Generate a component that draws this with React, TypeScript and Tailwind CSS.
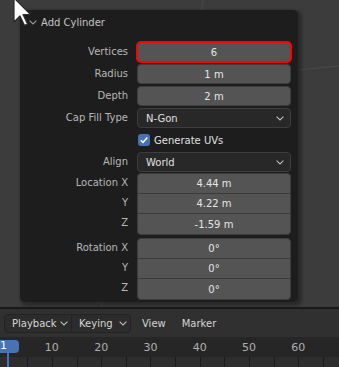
import React from 'react';

// Blender "Adjust Last Operation" panel over the 3D viewport, with the timeline header below

const FRAME_X = (f: number) => 7.5 + (f - 1) * 4.93;

const Chevron: React.FC<{ className?: string }> = ({ className = '' }) => (
  <svg width="8" height="5" viewBox="0 0 8 5" className={className}>
    <path d="M0.6 0.6 L4 4 L7.4 0.6" fill="none" stroke="currentColor" strokeWidth="1.1" />
  </svg>
);

const Label: React.FC<{ text: string }> = ({ text }) => (
  <div className="w-[108px] h-[20px] leading-[20px] text-right text-[10px] text-[#b8b8b8]">{text}</div>
);

const NumberField: React.FC<{ value: string; active?: boolean }> = ({ value, active }) => (
  <div
    className={`h-[20px] rounded-[4px] bg-[#545454] flex items-center justify-center text-[10px] text-[#e6e6e6] border ${
      active ? 'border-[#ff0000] ring-1 ring-[#ff0000]' : 'border-[#3d3d3d]'
    }`}
  >
    {value}
  </div>
);

const SelectField: React.FC<{ value: string }> = ({ value }) => (
  <div className="h-[20px] rounded-[4px] bg-[#282828] border border-[#3d3d3d] flex items-center pl-[8px] pr-[6px] text-[10px] text-[#e0e0e0]">
    <span>{value}</span>
    <Chevron className="ml-auto text-[#bdbdbd]" />
  </div>
);

const Row: React.FC<{ label: string; children: React.ReactNode }> = ({ label, children }) => (
  <div className="flex items-center">
    <Label text={label} />
    <div className="ml-[9px] w-[154px]">{children}</div>
  </div>
);

const VectorGroup: React.FC<{ labels: string[]; values: string[] }> = ({ labels, values }) => (
  <div className="flex">
    <div className="flex flex-col">
      {labels.map((l) => (
        <Label key={l} text={l} />
      ))}
    </div>
    <div className="ml-[9px] w-[154px] rounded-[4px] overflow-hidden bg-[#545454] border border-[#3d3d3d] divide-y divide-[#3a3a3a]">
      {values.map((v, i) => (
        <div key={i} className="h-[20px] flex items-center justify-center text-[10px] text-[#e6e6e6]">
          {v}
        </div>
      ))}
    </div>
  </div>
);

const Cursor = () => (
  <svg width="40" height="34" viewBox="0 0 40 34" className="absolute left-0 top-0 z-20">
    <polygon
      points="14,-2 14,22 20,16 24.5,25.5 27.5,24 23,14.5 30.5,14.5"
      fill="#ffffff"
      stroke="#2a2a2a"
      strokeWidth="1.2"
      strokeLinejoin="round"
    />
  </svg>
);

export default function App() {
  const ticks = [];
  for (let f = 5; f <= 70; f += 5) ticks.push(f);

  return (
    <div className="w-[339px] h-[367px] overflow-hidden flex flex-col bg-[#3c3c3c] font-['DejaVu_Sans',sans-serif] select-none">
      {/* 3D viewport */}
      <div className="relative h-[307px] pl-[20px] pt-[10px]">
        <svg width="339" height="307" className="absolute left-0 top-0">
          <line x1="203" y1="0" x2="199" y2="30" stroke="#4a4a4a" strokeWidth="1" />
          <line x1="298" y1="70" x2="339" y2="66" stroke="#4a4a4a" strokeWidth="1" />
          <line x1="103" y1="303" x2="101" y2="307" stroke="#4a4a4a" strokeWidth="1" />
        </svg>
        <Cursor />

        <div className="relative w-[278px] h-[292px] rounded-[5px] bg-[#1d1d1d] shadow-[2px_2px_3px_2px_rgba(0,0,0,0.3)]">
          <div className="h-[24px] flex items-center pl-[9px] text-[10px] text-[#c4c4c4]">
            <Chevron className="text-[#9a9a9a]" />
            <span className="ml-[4px]">Add Cylinder</span>
          </div>

          <div className="mt-[8px] flex flex-col gap-[2px]">
            <Row label="Vertices">
              <NumberField value="6" active />
            </Row>
            <Row label="Radius">
              <NumberField value="1 m" />
            </Row>
            <Row label="Depth">
              <NumberField value="2 m" />
            </Row>
            <Row label="Cap Fill Type">
              <SelectField value="N-Gon" />
            </Row>
            <Row label="">
              <div className="flex items-center h-[20px] pl-[1px]">
                <div className="w-[12px] h-[12px] rounded-[3px] bg-[#4772b3] flex items-center justify-center">
                  <svg width="10" height="10" viewBox="0 0 10 10">
                    <path d="M1.8 5.2 L4 7.4 L8.3 2.4" fill="none" stroke="#ffffff" strokeWidth="1.5" />
                  </svg>
                </div>
                <span className="ml-[4px] text-[10px] text-[#e0e0e0]">Generate UVs</span>
              </div>
            </Row>
            <Row label="Align">
              <SelectField value="World" />
            </Row>
          </div>

          <div className="mt-[1px]">
            <VectorGroup labels={['Location X', 'Y', 'Z']} values={['4.44 m', '4.22 m', '-1.59 m']} />
          </div>
          <div className="mt-[3px]">
            <VectorGroup labels={['Rotation X', 'Y', 'Z']} values={['0°', '0°', '0°']} />
          </div>
        </div>
      </div>

      <div className="h-[2px] bg-[#191919]" />

      {/* Timeline header */}
      <div className="h-[28px] bg-[#303030] flex items-center pl-[4px] text-[10px] text-[#d6d6d6]">
        <div className="flex h-[19px] rounded-[4px] border border-[#242424] bg-[#2c2c2c]">
          <div className="w-[67px] flex items-center pl-[7px] pr-[3px] border-r border-[#242424]">
            <span>Playback</span>
            <Chevron className="ml-auto text-[#bdbdbd]" />
          </div>
          <div className="w-[58px] flex items-center pl-[7px] pr-[3px]">
            <span>Keying</span>
            <Chevron className="ml-auto text-[#bdbdbd]" />
          </div>
        </div>
        <span className="ml-[11px]">View</span>
        <span className="ml-[16px]">Marker</span>
      </div>

      {/* Timeline */}
      <div className="relative flex-1 flex flex-col bg-[#262626]">
        <div className="relative h-[20px]">
          {[10, 20, 30, 40, 50, 60].map((f) => (
            <span
              key={f}
              className="absolute top-[3px] -translate-x-1/2 text-[11px] text-[#b0b0b0]"
              style={{ left: FRAME_X(f) }}
            >
              {f}
            </span>
          ))}
          <div className="absolute left-[-4px] top-[3px] w-[23px] h-[13px] rounded-[4px] bg-[#4772b3] flex items-center justify-center pr-[8px] text-[11px] text-white">
            1
          </div>
        </div>
        <div className="relative flex-1 bg-[#2d2d2d]">
          {ticks.map((f) => (
            <div key={f} className="absolute top-0 bottom-0 w-px bg-[#1c1c1c]" style={{ left: Math.round(FRAME_X(f)) }} />
          ))}
        </div>
        <div className="absolute left-[7px] top-[16px] bottom-0 w-[2px] bg-[#4772b3]" />
      </div>
    </div>
  );
}
